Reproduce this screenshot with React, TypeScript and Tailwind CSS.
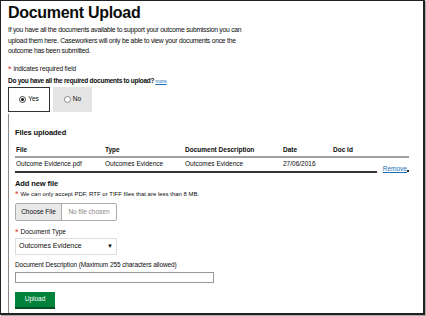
import React from 'react';

const cols = ['w-[89px]', 'w-[80px]', 'w-[98px]', 'w-[50px]', 'w-[50px]'];

const Req = () => <span className="text-[#d4351c] text-[9px] leading-none mr-[2px] align-[-1px]">*</span>;

const App: React.FC = () => {
  return (
    <div className="w-[426px] h-[316px] bg-white font-['Liberation_Sans',Arial,sans-serif] text-[#0b0c0c]">
      <div className="w-[425px] h-[315px] border border-[#222] border-r-2 border-b-2 shadow-[1px_1px_0_#aaa] flex flex-col">
        <div className="pl-[7px] pt-[2px]">
          <h1 className="text-[16px] leading-[20px] font-bold tracking-[-0.3px]">Document Upload</h1>
          <p className="mt-[2px] text-[6.8px] leading-[10.5px] tracking-[-0.25px] whitespace-nowrap">
            If you have all the documents available to support your outcome submission you can<br />
            upload them here. Caseworkers will only be able to view your documents once the<br />
            outcome has been submitted.
          </p>
          <p className="mt-[7px] text-[6.5px] leading-[10px] tracking-[-0.1px]">
            <Req />indicates required field
          </p>
          <p className="mt-[2px] text-[6.5px] leading-[10px] font-bold tracking-[-0.25px]">
            Do you have all the required documents to upload?
            <a className="font-normal text-[5px] tracking-normal text-[#1d70b8] underline ml-[1px]">more</a>
          </p>
          <div className="mt-[1px] flex gap-[3px]">
            <label className="w-[42px] h-[25px] border-[1.5px] border-[#333] flex items-center justify-center gap-[2px] text-[6.5px]">
              <span className="w-[7px] h-[7px] rounded-full border border-[#444] flex items-center justify-center">
                <span className="w-[3px] h-[3px] rounded-full bg-[#111]" />
              </span>
              Yes
            </label>
            <label className="w-[39px] h-[25px] bg-[#e4e4e4] flex items-center justify-center gap-[2px] text-[6.5px]">
              <span className="w-[7px] h-[7px] rounded-full border border-[#888] bg-white" />
              No
            </label>
          </div>
        </div>

        <div className="ml-[7px] mt-[2px] flex-1 border-l border-[#8a8a8a] pl-[6px] pt-[14px]">
          <h2 className="text-[7.5px] leading-[10px] font-bold tracking-[-0.1px]">Files uploaded</h2>
          <div className="mt-[7px] w-[394px]">
            <div className="flex text-[6.5px] leading-[10px] font-bold pl-[1px] pb-[1px] border-b-2 border-[#a0a0a0]">
              {['File', 'Type', 'Document Description', 'Date', 'Doc Id'].map((h, i) => (
                <div key={h} className={cols[i]}>{h}</div>
              ))}
            </div>
            <div className="flex items-end">
              <div className="flex w-[364px] text-[6.5px] leading-[10px] pl-[1px] pt-[1px] pb-[2px] border-b-2 border-[#333]">
                <div className={cols[0]}>Outcome Evidence.pdf</div>
                <div className={cols[1]}>Outcomes Evidence</div>
                <div className={cols[2]}>Outcomes Evidence</div>
                <div className={cols[3]}>27/06/2016</div>
              </div>
              <a className="ml-[6px] mb-[0px] text-[6.5px] leading-[8px] text-[#1d70b8] underline flex items-end">
                Remove<span className="w-[2px] h-[2px] bg-[#222] mb-[1px]" />
              </a>
            </div>
          </div>

          <h2 className="mt-[6px] text-[7.5px] leading-[10px] font-bold tracking-[-0.1px]">Add new file</h2>
          <p className="text-[6px] leading-[10px]">
            <Req />We can only accept PDF, RTF or TIFF files that are less than 8 MB.
          </p>
          <div className="mt-[4px] w-[102px] h-[18px] flex border border-[#aaa] rounded-[2px] text-[6.5px]">
            <span className="w-[46px] bg-[#e9e9e9] border-r border-[#aaa] flex items-center justify-center">Choose File</span>
            <span className="flex-1 flex items-center justify-center text-[#888]">No file chosen</span>
          </div>

          <p className="mt-[6px] text-[6.5px] leading-[10px]">
            <Req />Document Type
          </p>
          <div className="mt-[1px] w-[102px] h-[17px] border border-[#ddd] flex items-center justify-between px-[3px] text-[7px]">
            <span>Outcomes Evidence</span>
            <span className="text-[6px]">▼</span>
          </div>

          <p className="mt-[5px] text-[6.5px] leading-[10px] tracking-[-0.1px]">Document Description (Maximum 255 characters allowed)</p>
          <div className="mt-[2px] w-[199px] h-[11px] border border-[#999]" />

          <button className="mt-[9px] w-[40px] h-[17px] bg-[#00823b] text-white text-[6.5px] border-b-2 border-[#004e22]">
            Upload
          </button>
        </div>
      </div>
    </div>
  );
};

export default App;
